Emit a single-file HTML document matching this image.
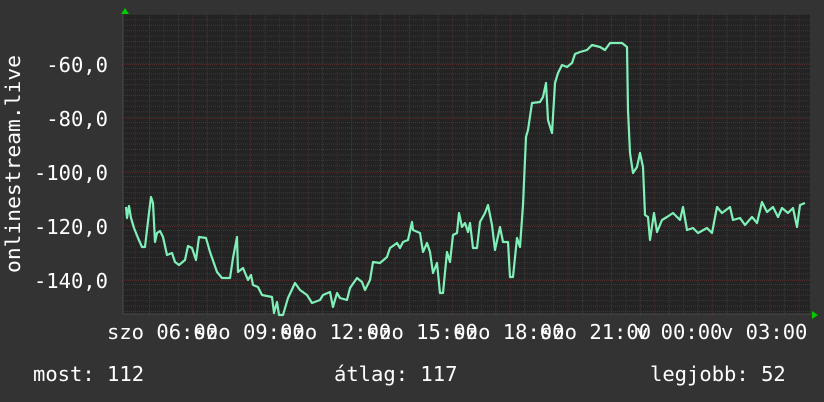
<!DOCTYPE html>
<html><head><meta charset="utf-8"><style>
html,body{margin:0;padding:0;background:#333;}
svg{display:block;}
text{font-family:"DejaVu Sans Mono","Liberation Mono",monospace;fill:#fff;font-size:20.5px;}
</style></head><body>
<svg id="s" width="824" height="402" viewBox="0 0 824 402" xmlns="http://www.w3.org/2000/svg">
<rect x="0" y="0" width="824" height="402" fill="#333"/>
<rect x="123" y="14" width="687" height="300" fill="#232323"/>
<g id="grid"></g>
<line x1="123" y1="314" x2="812" y2="314" stroke="#4a4a4a" stroke-width="1"/>
<line x1="123" y1="12" x2="123" y2="314" stroke="#4a4a4a" stroke-width="1"/>
<polygon points="121,14 125,8 129,14" fill="#0c0"/>
<polygon points="812,311 818,315 812,319" fill="#0c0"/>
<polyline fill="none" stroke="#80f0b8" stroke-width="2.2" stroke-linejoin="round" points="126,207 127,218 129,206 131,218 134,228 138,238 142,247 145,247 147,230 149,213 151,197 153,203 155,242 157,233 160,231 163,237 167,255 172,253 175,262 179,265 185,260 188,246 192,248 196,260 199,237 206,238 210,252 217,272 222,278 230,278 233,258 237,237 238,272 243,268 248,280 251,275 253,285 258,287 262,295 272,297 274,313 277,302 279,315 283,315 288,298 295,283 300,290 307,295 312,303 320,300 323,295 330,292 333,307 337,293 340,298 347,300 350,288 357,278 362,282 365,290 370,280 373,262 380,263 387,257 390,248 397,243 400,248 403,242 408,240 412,222 413,230 420,233 423,252 427,243 430,252 433,273 437,263 440,293 443,293 447,252 450,262 453,235 457,233 459,213 462,227 465,223 468,232 470,223 473,248 477,248 480,222 485,213 488,205 492,225 495,250 500,227 503,242 508,242 510,277 513,277 517,238 520,247 523,205 526,137 528,130 532,103 540,102 543,97 546,83 548,120 552,133 555,83 558,73 562,65 567,67 572,63 575,54 580,52 587,50 592,45 600,47 605,50 610,43 622,43 627,47 628,110 630,153 633,173 637,167 640,153 643,167 645,215 648,217 650,240 654,213 657,232 662,220 667,217 673,213 680,220 683,207 687,230 693,228 698,233 707,228 712,233 717,207 722,213 730,207 733,220 740,218 745,225 752,217 757,223 762,202 767,212 773,207 778,217 782,208 788,213 793,208 797,227 800,205 805,203"/>
<g text-anchor="end">
<text x="108" y="72">-60,0</text>
<text x="108" y="126">-80,0</text>
<text x="108" y="180">-100,0</text>
<text x="108" y="234">-120,0</text>
<text x="108" y="288">-140,0</text>
</g>
<text x="0" y="0" transform="translate(20,273) rotate(-90)" textLength="218" lengthAdjust="spacingAndGlyphs">onlinestream.live</text>
<text x="107" y="339">szo 06:00</text>
<text x="193.6" y="339">szo 09:00</text>
<text x="280.2" y="339">szo 12:00</text>
<text x="366.8" y="339">szo 15:00</text>
<text x="453.4" y="339">szo 18:00</text>
<text x="540" y="339">szo 21:00</text>
<text x="636" y="339">v 00:00</text>
<text x="721" y="339">v 03:00</text>
<text x="33" y="381">most: 112</text>
<text x="334" y="381">átlag: 117</text>
<text x="650" y="381">legjobb: 52</text>
</svg>
<script>
(function(){
var g=document.getElementById('grid'),h='';
for(var y=14.5;y<314;y+=5.4){h+='<line x1="123" x2="810" y1="'+y.toFixed(1)+'" y2="'+y.toFixed(1)+'" stroke="#3a3a3a" stroke-dasharray="1,1"/>';}
for(var x=149.5;x<810;x+=28.87){h+='<line y1="14" y2="317" x1="'+x.toFixed(1)+'" x2="'+x.toFixed(1)+'" stroke="#3e3e3e" stroke-dasharray="1,1"/>';}
for(var x=135;x<810;x+=28.87){h+='<line y1="14" y2="317" x1="'+x.toFixed(1)+'" x2="'+x.toFixed(1)+'" stroke="#4e2a2a" stroke-dasharray="1,1"/>';}
for(var y=10;y<314;y+=54){if(y<14)continue;h+='<line x1="120" x2="810" y1="'+(y+0.5)+'" y2="'+(y+0.5)+'" stroke="#4e2a2a" stroke-dasharray="1,1"/>';}
g.innerHTML=h;
})();
</script>
</body></html>
